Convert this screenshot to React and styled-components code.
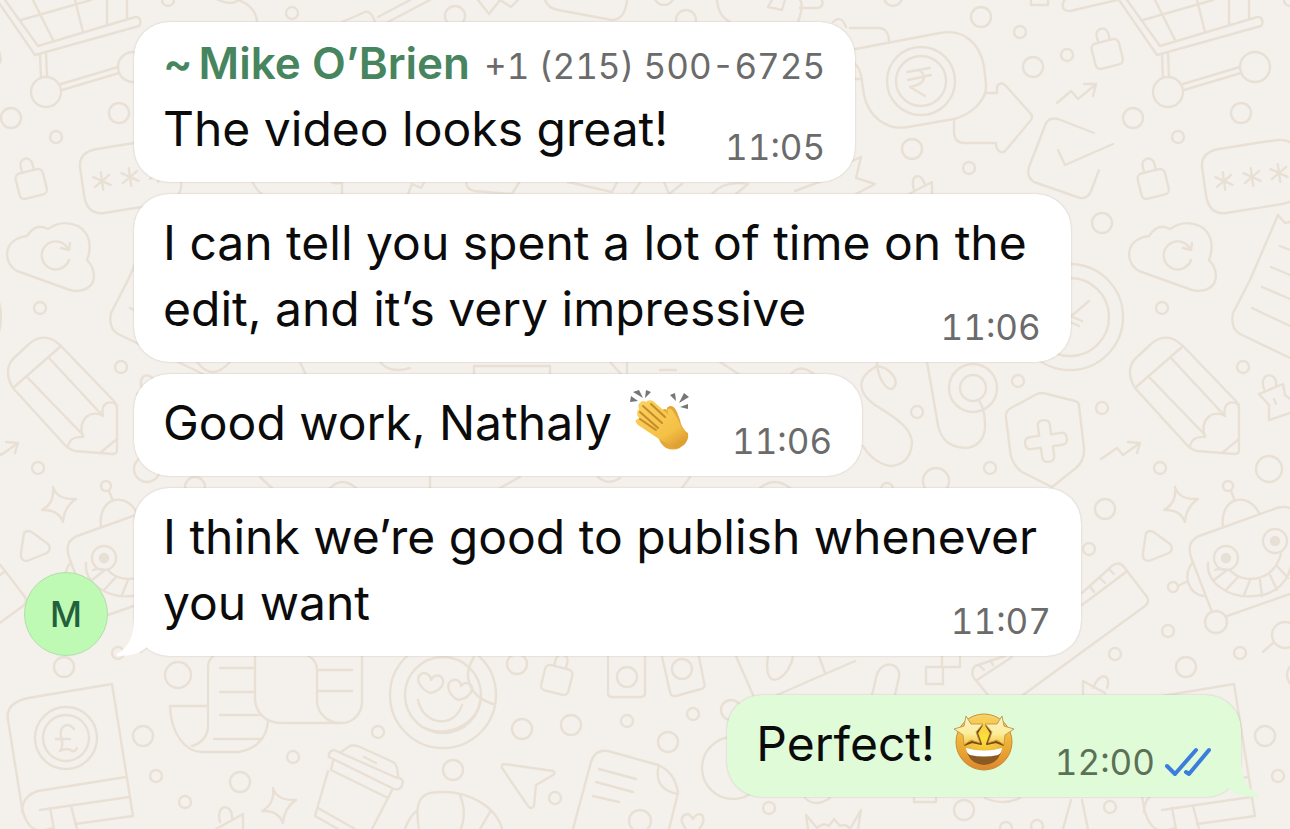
import React, { Component } from "react";
import styled, { createGlobalStyle, css } from "styled-components";


const GlobalStyles = createGlobalStyle`
	* {
		box-sizing: border-box;
	}

	body {
		margin: 0;
		background: #f4f0eb;
		color: #0b0b0b;
		font-family: Inter, "Liberation Sans", sans-serif;
	}
`;

const ChatWrapper = styled.main`
	position: relative;
	min-height: 100vh;
	padding: 22px 49px 31px 24px;
	overflow: hidden;
`;

const Wallpaper = styled.svg`
	position: absolute;
	inset: 0;
	width: 100%;
	height: 100%;
	fill: none;
	stroke: #e9e0d5;
	stroke-width: 2.4;
	stroke-linecap: round;
	stroke-linejoin: round;
`;

const MessageGroup = styled.section`
	position: relative;
	display: flex;
	align-items: flex-end;
	justify-content: ${props => (props.$own ? "flex-end" : "flex-start")};
	gap: 26px;
	margin-bottom: 39px;

	&:last-child {
		margin-bottom: 0;
	}
`;

const BubbleList = styled.div`
	display: flex;
	flex-direction: column;
	align-items: flex-start;
	gap: 12px;
`;

const Avatar = styled.div`
	display: flex;
	flex: none;
	align-items: center;
	justify-content: center;
	width: 84px;
	height: 84px;
	border: 1px solid #b0dfa9;
	border-radius: 50%;
	background: #bffab5;
	color: #22613c;
	font-size: 35px;
	font-weight: 500;
`;

const Bubble = styled.article`
	position: relative;
	padding: 16px 30px 20px 29px;
	border-radius: 35px;
	background: ${props => (props.$own ? "#dffbd7" : "#ffffff")};
	box-shadow: 0 0 2px rgba(80, 60, 40, 0.25);

	${props => props.$titled && css`
		padding-top: 12px;
	`}
`;

const Tail = styled.svg`
	position: absolute;
	bottom: 0;
	width: 35px;
	height: 44px;
	fill: ${props => (props.$own ? "#dffbd7" : "#ffffff")};
	${props => (props.$own ? "right: -18px;" : "left: -18px;")}
	${props => props.$own && "transform: scaleX(-1);"}
`;

const Sender = styled.header`
	display: flex;
	align-items: baseline;
	gap: 14px;
	height: 62px;
	line-height: 58px;
`;

const SenderName = styled.span`
	display: flex;
	gap: 6px;
	color: #47855f;
	font-size: 44px;
	font-weight: 600;
`;

const Phone = styled.span`
	color: #6b6b6b;
	font-size: 35px;
	font-variant-numeric: tabular-nums;
`;

const Line = styled.p`
	display: flex;
	align-items: center;
	gap: 18px;
	margin: 0;
	padding-right: 14px;
	font-size: 48px;
	line-height: 66px;
`;

const LastLine = styled.div`
	display: flex;
	align-items: flex-end;
	justify-content: space-between;
	gap: 26px;
`;

const Stamp = styled.div`
	display: flex;
	align-items: center;
	gap: 10px;
	margin-bottom: -9px;
	color: ${props => (props.$own ? "#5b7056" : "#6b6b6b")};
	font-size: 35px;
	font-variant-numeric: tabular-nums;
	line-height: 48px;
`;

const Ticks = styled.svg`
	width: 46px;
	height: 30px;
	fill: none;
	stroke: #3b7ddd;
	stroke-width: 4;
	stroke-linecap: round;
	stroke-linejoin: round;
`;

const Emoji = styled.svg`
	width: 62px;
	height: 62px;
	margin: -2px 0 2px;
`;


// x, y, radius
const dots = [
	[11, 118, 10], [56, 137, 6], [119, 113, 10], [40, 308, 6], [121, 367, 6], [38, 468, 6],
	[147, 469, 13], [46, 631, 6], [118, 653, 6], [64, 667, 10], [163, 635, 13], [178, 675, 13],
	[143, 736, 10], [156, 776, 6], [185, 802, 6], [240, 782, 10], [293, 757, 6], [378, 732, 6],
	[168, 0, 6], [292, 13, 6], [195, 487, 10], [455, 16, 10], [664, -5, 10], [686, 20, 10],
	[893, -3, 9], [981, 17, 10], [1020, 32, 6], [1033, 67, 10], [1067, 55, 6], [912, 149, 10],
	[969, 168, 6], [1102, 223, 10], [1018, 381, 6], [917, 412, 6], [990, 468, 6], [936, 481, 13],
	[887, 489, 6], [1102, 408, 6], [1105, 509, 10], [1089, 549, 6], [1115, 654, 6], [517, 664, 10],
	[522, 729, 10], [571, 725, 10], [627, 721, 6], [668, 742, 10], [693, 714, 6], [453, 770, 10],
	[555, 798, 6], [640, 821, 11], [731, 710, 10], [769, 808, 6], [964, 810, 10], [1110, 807, 6],
	[1006, 828, 6], [1037, 826, 6]
];

const locks = [
	[1107, 53, -14], [31, 183, -14], [557, 679, 14]
];

const asterisks = [
	[102, 181], [130, 177], [157, 173]
];

const doodles = [
	// shopping cart
	"M-3 0 L35 55 L139 26 Q142 22 139 18 Q137 16 132 18 L38 46 L5 0 M21 20 L91 0 M33 0 L53 40 M75 0 L83 32 M107 0 V25 M127 0 V18",
	"M40 55 L41 78 M46 53 L47 77 M61 84 L118 67 M62 90 L119 73",
	// rupee note with an arrow
	"M850 50 L940 33 C965 28 980 45 984 66 L986 85 C987 100 972 114 954 119 L908 127 C885 131 868 115 864 95 L861 75 C859 68 855 62 850 60 M850 28 H878 C886 28 889 33 889 43 M850 79 H862",
	"M907 72 L930 68 M908 80 L931 75 M918 70 C927 74 927 84 910 87 L925 96",
	"M985 93 H997 V88 C997 83 1003 82 1006 86 L1031 114 Q1033 117 1031 120 L1006 150 C1002 155 996 151 996 143 H965 C957 143 954 138 954 132 V119",
	// trends and the tick box
	"M1057 103 L1071 91 L1078 99 L1095 85 M1084 84 H1096 L1093 96",
	"M1101 459 L1117 448 L1123 455 L1140 443 M1128 442 L1140 443 L1137 453",
	"M1094 133 L1058 119 Q1050 117 1046 123 L1029 167 Q1026 177 1034 182 L1080 198 Q1088 199 1091 191 L1099 170 M1058 150 L1065 165 L1113 144",
	// password field
	"M134 143 L97 149 Q79 152 80 167 L84 195 Q87 215 104 213 L160 204 Q184 199 181 181 L178 160 Q174 138 156 140 L134 143",
	// cloud
	"M27 236 Q36 222 48 229 Q62 219 78 226 C92 234 91 250 87 260 C95 268 96 280 90 286 Q82 293 70 290 L17 271 C2 262 3 239 27 236",
	"M67 247 A14 14 0 1 0 69 260 M61 248 L69 250 L70 243",
	// sheet
	"M168 222 L163 223 L156 215 L128 280 L111 313 Q108 328 118 334 L168 358 M158 246 L168 250 M149 267 L168 275 M140 287 L168 299 M130 308 L168 326",
	// clock
	"M1068 319 L1089 301 M1070 316 L1082 321 M1070 322 L1079 326",
	// pencil
	"M13 388 C5 375 7 364 15 357 L28 345 C38 335 50 335 61 346 L113 400 Q117 404 117 410 V450 Q117 454 113 454 L75 451 Q68 449 64 444 L13 388 L61 346",
	"M27 377 L83 435 M49 358 L102 415 M68 446 Q70 436 83 437 C77 418 92 409 103 416 C100 402 110 400 117 405 M100 453 L117 439",
	// star pin
	"M168 413 L147 420 V405 L137 394 L161 384 L163 395 L168 399 M142 389 C136 371 156 372 154 385 M152 399 L154 404",
	// sparkles
	"M53 487 Q57 500 76 499 Q64 507 63 522 Q58 509 42 510 Q55 503 53 487Z",
	"M273 788 Q277 801 296 800 Q284 808 283 823 Q278 810 262 811 Q275 804 273 788Z",
	// play
	"M24 533 Q28 529 33 533 L48 544 Q52 549 47 553 L27 561 Q20 561 21 553Z",
	// stethoscope and ribbon
	"M979 400 C985 410 985 420 985 428 C984 441 975 448 965 448 C945 447 940 435 938 425 L927 362",
	"M877 366 C855 378 858 393 875 405 C900 420 912 430 912 443 C911 460 900 466 890 466 C878 464 868 455 863 446 M877 362 C877 375 885 390 892 389 C902 382 890 367 876 366",
	// shield
	"M1037 394 Q1042 392 1047 394 L1075 401 Q1079 402 1079 406 L1084 448 Q1085 460 1076 468 L1052 487 L1022 472 Q1011 464 1010 450 L1006 418 Q1005 411 1011 408 Z",
	// robot
	"M109 491 L113 501 M101 527 C97 498 125 490 137 513 M90 612 L70 560 C64 545 70 538 80 535 L155 508 Q162 506 168 508 M105 616 L168 594",
	"M86 563 C84 583 108 599 132 596 C155 595 168 580 170 560 M93 570 Q98 568 105 570 M108 570 C118 583 150 585 159 554 M105 570 L92 580 M116 577 L104 590 M128 580 L122 595 M138 580 L140 596 M148 575 L155 590 M155 566 L166 578",
	"M71 562 C60 575 66 594 82 596 M56 586 L64 582",
	"M141 652 L151 643",
	// ruler
	"M1082 593 L1113 565 Q1120 561 1124 567 L1147 597 Q1150 602 1145 606 L1023 695 M1082 605 L1126 572 M1090 586 L1094 592 M1100 578 L1105 583 M1110 570 L1114 574",
	"M1005 656 L975 666 Q970 672 974 678 L988 695 M977 680 L1012 657 M980 666 L984 670 M990 660 L993 665",
	// book
	"M112 684 L28 698 Q5 703 8 720 L22 808 C26 826 34 835 52 828 M112 684 L133 816 L75 824 M22 812 Q22 796 38 791 L126 777 M40 810 L129 797 M50 808 L54 829 M71 806 L77 829",
	"M74 729 C68 721 59 726 61 737 Q64 745 60 751 Q68 747 72 751 Q75 752 77 748 M56 739 H70",
	// scroll
	"M213 656 Q208 660 208 668 V728 Q206 742 192 746 M206 706 H170 C171 735 186 752 202 752 H238 C255 750 267 738 268 721",
	"M255 656 V700 C257 716 268 723 282 723 H342 C354 723 362 712 362 702 V656 M308 656 Q317 660 317 670 V702 C318 714 328 723 340 723",
	"M220 668 H253 M220 692 H253 M220 715 H260 M214 739 H262 M318 670 H352 M318 691 H352",
	// smiling coin
	"M474 657 C462 675 468 696 493 704 M480 702 C476 724 448 738 425 728 M418 700 C424 727 455 728 462 705",
	"M430 693 C419 688 415 678 421 674 C426 671 431 676 431 680 C434 674 441 674 443 680 C444 688 436 692 430 693Z M458 700 C448 695 446 684 451 681 C456 678 461 681 461 686 C465 680 473 684 472 690 C470 696 464 699 458 700Z",
	// coffee
	"M334 750 Q328 751 329 757 L394 789 Q402 791 403 781 Q400 777 397 778 Z M341 752 L350 746 Q353 744 360 747 L393 762 Q398 765 398 777 M364 757 L376 763",
	"M333 761 L331 770 L388 798 L392 790 M328 771 L315 816 L338 829 M388 798 L372 829 M318 808 L355 829",
	// cookies
	"M419 829 C416 812 416 796 430 793 C470 787 498 810 502 829 M460 795 C466 810 464 820 461 829 M490 812 L480 829 M405 829 Q410 815 418 810",
	// hanging tags
	"M216 829 L243 814 V829 M220 822 C215 803 233 803 232 818",
	"M1083 695 V681 L1105 693 M1093 688 C1100 670 1112 675 1107 688",
	"M909 194 L932 182 V194 M914 190 C909 173 922 172 925 185",
	"M850 162 L861 157 L856 178 L875 184 L856 194",
	// cards and album
	"M608 650 V693 Q608 697 612 697 H641 Q645 697 645 693 V650 M661 652 L670 692 Q671 697 676 696 L701 689 Q706 688 704 682 L698 652",
	"M736 656 L753 695 M777 695 L855 661 M768 656 C765 675 770 682 778 679 C786 675 792 665 793 656 M819 656 L825 673",
	// paper plane
	"M504 764 L553 771 Q556 773 553 775 L536 785 L534 806 Q531 810 528 806 L502 768 Q501 764 504 764Z",
	// document
	"M573 829 L591 762 Q595 749 608 751 L658 765 Q675 772 678 793 L669 829 M659 765 C655 780 660 790 677 794 M599 769 L636 779 M596 782 L633 792 M593 796 L619 802",
	// flower and crown
	"M686 829 Q677 817 687 814 Q690 814 693 819 Q697 812 702 815 Q706 821 699 829",
	"M808 829 L806 815 L817 828 Q823 822 829 826 L834 819 L840 826 Q846 823 850 829 L861 810 L858 829",
	// clipped shapes along the edges
	"M872 695 L877 674 C882 660 901 662 899 677 L895 695 M926 667 H943 V684 H926Z M942 656 V667 H960 V656",
	"M1063 829 L1071 800 M1082 800 L1088 829 M914 798 V802 H936 V798 M985 798 Q1003 806 1020 798 M805 798 Q815 808 830 798",
	"M1117 0 L1070 11 C1060 12 1061 0 1068 -2 M1031 -4 V5 H1048 V-4",
	"M218 0 Q232 6 238 0 Q256 6 257 22 M342 22 L365 12 Q371 10 375 22 M378 17 L410 0 M388 22 L430 0",
	"M478 0 L489 14 L500 0 L511 7 L518 0 M545 0 Q548 8 558 10 L612 20 Q625 20 627 0 M717 0 Q718 16 730 22 M798 22 Q804 5 800 0 M772 0 L768 7 L782 10 L785 0 M800 8 H818 Q824 6 822 0 M833 22 Q841 14 846 27",
	"M252 181 Q256 190 262 194 M330 181 Q337 186 343 181 M342 182 V194 M408 194 L412 184 L421 188 L425 181 M466 181 Q466 190 475 191 L512 194 L520 181 M568 182 L612 192 L617 182 M632 194 L641 181 M664 182 L669 194 L682 184 M712 194 Q724 180 748 184 L736 194 M795 191 L822 181",
	"M178 362 L203 374 M197 362 Q212 382 230 362 M300 362 L306 375 M380 362 Q390 374 410 368 M474 375 V366 H550 V375 M610 362 L622 375 M627 375 V362 M660 370 H676 M720 362 L740 375 M790 375 Q800 362 815 375",
	"M260 477 L272 488 M330 488 Q342 476 356 488 M430 477 V488 M500 488 L520 477 M598 477 Q608 486 620 478 M690 477 L682 488 M760 488 Q775 476 790 488"
];


const Doodles = () => (
	<Wallpaper aria-hidden="true">
		<defs>
			<g id="doodles">
				{dots.map(([x, y, r]) => <circle key={`${x}-${y}`} cx={x} cy={y} r={r} />)}
				{locks.map(([x, y, turn]) => (
					<g key={x} transform={`translate(${x} ${y}) rotate(${turn})`}>
						<rect x="-14" y="-12" width="28" height="26" rx="5" />
						<path d="M-6 -12 V-19 A6 6 0 0 1 6 -19 V-12" />
					</g>
				))}
				{asterisks.map(([x, y]) => (
					<path key={x} transform={`translate(${x} ${y}) rotate(-8)`} d="M0 -9 V9 M-8 -5 L8 5 M-8 5 L8 -5" />
				))}
				{doodles.map(d => <path key={d} d={d} />)}
				<circle cx="46" cy="92" r="15" />
				<circle cx="133" cy="67" r="15" />
				<circle cx="921" cy="81" r="34" />
				<circle cx="921" cy="81" r="25" />
				<circle cx="1070" cy="317" r="53" />
				<circle cx="1070" cy="317" r="39" />
				<circle cx="973" cy="388" r="24" />
				<circle cx="973" cy="388" r="13" />
				<circle cx="66" cy="738" r="31" />
				<circle cx="66" cy="738" r="23" />
				<circle cx="443" cy="695" r="53" />
				<circle cx="443" cy="695" r="38" />
				<circle cx="733" cy="768" r="31" />
				<circle cx="627" cy="677" r="10" />
				<circle cx="682" cy="669" r="10" />
				<circle cx="106" cy="486" r="5" />
				<circle cx="51" cy="587" r="5" />
				<circle cx="94" cy="622" r="11" />
				<circle cx="104" cy="558" r="12" />
				<circle cx="104" cy="558" r="4" fill="#e9e0d5" />
				<circle cx="153" cy="541" r="12" />
				<circle cx="153" cy="541" r="4" fill="#e9e0d5" />
				<path transform="translate(1046 441) rotate(-8)" d="M-6 -16 Q-6 -21 0 -21 Q6 -21 6 -16 V-6 H16 Q21 -6 21 0 Q21 6 16 6 H6 V16 Q6 21 0 21 Q-6 21 -6 16 V6 H-16 Q-21 6 -21 0 Q-21 -6 -16 -6 H-6Z" />
			</g>
		</defs>
		<use href="#doodles" x="-1122" />
		<use href="#doodles" />
		<use href="#doodles" x="1122" />
	</Wallpaper>
);

const BubbleTail = ({ own }) => (
	<Tail $own={own} viewBox="0 0 35 44" aria-hidden="true">
		<path d="M18 0 V6 C18 24 13 35 1 42 Q0 44 3 44 C15 44 24 41 30 36 L35 20 V0Z" />
	</Tail>
);

const ClappingHands = () => (
	<Emoji viewBox="0 0 62 62" role="img" aria-label="clapping hands">
		<defs>
			<linearGradient id="skin" x1="0" y1="0" x2="0.7" y2="1">
				<stop offset="0" stopColor="#fbd260" />
				<stop offset="0.75" stopColor="#f5c146" />
				<stop offset="1" stopColor="#dfa032" />
			</linearGradient>
		</defs>
		<g fill="#747678">
			<path d="M1 6 L8 11 L0 12Z M3 2 L9 0 L13 8Z M16 0 L21 2 L15 8Z M40 5 L45 3 L46 11Z M54 3 L59 7 L49 13Z M58 14 V19 L50 17Z" />
		</g>
		<path d="M30 24 Q33 17 37 20 Q36 17 40 16 Q44 15 47 22 L50 30 Q51 37 58 44 L50 58 Q43 61 36 58 Q30 54 28 46Z" fill="#e3a738" />
		<path d="M9 19 Q7 14 11 12 Q12 10 16 12 Q18 9 23 11 L39 25 Q36 20 38 19 Q41 17 44 23 Q48 29 50 34 Q52 40 58 43 Q59 49 55 54 Q49 60 42 57 Q35 53 29 49 L8 35 Q3 30 8 29 L9 28 Q5 23 9 19Z" fill="url(#skin)" />
		<path d="M13 16 L32 33 M10 22 L28 38 M10 29 L26 40 M21 14 L35 27" fill="none" stroke="#c68c2b" strokeWidth="2" strokeLinecap="round" />
	</Emoji>
);

const StarStruck = () => (
	<Emoji viewBox="0 0 62 62" role="img" aria-label="star-struck">
		<defs>
			<linearGradient id="face" x1="0" y1="0" x2="0" y2="1">
				<stop offset="0" stopColor="#fbe68a" />
				<stop offset="0.5" stopColor="#f0b435" />
				<stop offset="1" stopColor="#dc8630" />
			</linearGradient>
			<radialGradient id="glow" cx="0.5" cy="0.42" r="0.5">
				<stop offset="0" stopColor="#fbe43c" />
				<stop offset="0.6" stopColor="#f5c83c" stopOpacity="0.6" />
				<stop offset="1" stopColor="#e2942c" stopOpacity="0" />
			</radialGradient>
			<linearGradient id="star" x1="0" y1="0" x2="0" y2="1">
				<stop offset="0" stopColor="#fff3c4" />
				<stop offset="0.6" stopColor="#fbec9c" />
				<stop offset="1" stopColor="#f7c93f" />
			</linearGradient>
		</defs>
		<circle cx="31" cy="31" r="28" fill="url(#face)" stroke="#c98a30" strokeWidth="1" />
		<circle cx="31" cy="31" r="28" fill="url(#glow)" />
		<path d="M13 38 Q31 42 49 38 Q46 53 31 54 Q16 53 13 38Z" fill="#8a5a22" />
		<path d="M13 37 Q31 42 49 37 Q49 42 45 44 Q31 47 17 44 Q13 42 13 37Z" fill="#fff" />
		<g fill="none" stroke="#7a4a14" strokeWidth="2" strokeLinejoin="round">
			<path d="M29 14 L24 22 L28 33 L19 31 L11 34" />
			<path d="M33 14 L38 22 L34 33 L43 31 L51 34" />
		</g>
		<g fill="url(#star)" stroke="#c79a4a" strokeWidth="1" strokeLinejoin="round">
			<path d="M13 5 L18 13 L30 13 L23 21 L27 32 L18 29 L11 34 L10 24 L1 18 L11 15Z" />
			<path d="M49 5 L44 13 L32 13 L39 21 L35 32 L44 29 L51 34 L52 24 L61 18 L51 15Z" />
		</g>
	</Emoji>
);

const ReadTicks = () => (
	<Ticks viewBox="0 0 46 30" role="img" aria-label="Read">
		<path d="M2 19 L10 27 L31 3 M21 25 L24 27 L44 3" />
	</Ticks>
);


class App extends Component {
	render() {
		return (
			<ChatWrapper>
				<GlobalStyles />
				<Doodles />

				<MessageGroup>
					<Avatar>M</Avatar>
					<BubbleList>
						<Bubble $titled>
							<Sender>
								<SenderName><span>~</span><span>Mike O’Brien</span></SenderName>
								<Phone>+1 (215) 500-6725</Phone>
							</Sender>
							<LastLine>
								<Line>The video looks great!</Line>
								<Stamp><time>11:05</time></Stamp>
							</LastLine>
						</Bubble>

						<Bubble>
							<Line>I can tell you spent a lot of time on the</Line>
							<LastLine>
								<Line>edit, and it’s very impressive</Line>
								<Stamp><time>11:06</time></Stamp>
							</LastLine>
						</Bubble>

						<Bubble>
							<LastLine>
								<Line>Good work, Nathaly <ClappingHands /></Line>
								<Stamp><time>11:06</time></Stamp>
							</LastLine>
						</Bubble>

						<Bubble>
							<Line>I think we’re good to publish whenever</Line>
							<LastLine>
								<Line>you want</Line>
								<Stamp><time>11:07</time></Stamp>
							</LastLine>
							<BubbleTail />
						</Bubble>
					</BubbleList>
				</MessageGroup>

				<MessageGroup $own>
					<Bubble $own>
						<LastLine>
							<Line>Perfect! <StarStruck /></Line>
							<Stamp $own><time>12:00</time> <ReadTicks /></Stamp>
						</LastLine>
						<BubbleTail own />
					</Bubble>
				</MessageGroup>
			</ChatWrapper>
		);
	}
}

export default App;
